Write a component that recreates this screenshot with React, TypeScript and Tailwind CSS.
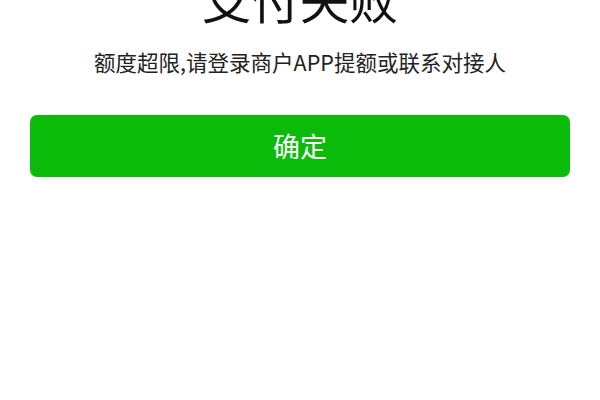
export default function App() {
  return (
    <div
      className="h-[400px] w-[600px] overflow-hidden bg-white px-[30px]"
      style={{ fontFamily: '"Noto Sans CJK SC", "Noto Sans", sans-serif' }}
    >
      {/* Result heading, scrolled partly out of view */}
      <h1 className="-mt-[32px] text-center text-[49px] font-normal leading-[60px] text-[#111]">
        支付失败
      </h1>
      <p className="mt-[20px] text-center text-[21.5px] leading-[28px] text-[#222]">
        额度超限,请登录商户APP提额或联系对接人
      </p>
      <button className="mt-[39px] flex h-[62px] w-full items-center justify-center rounded-[7px] bg-[#0abb0a] text-[27px] text-white">
        确定
      </button>
    </div>
  );
}
